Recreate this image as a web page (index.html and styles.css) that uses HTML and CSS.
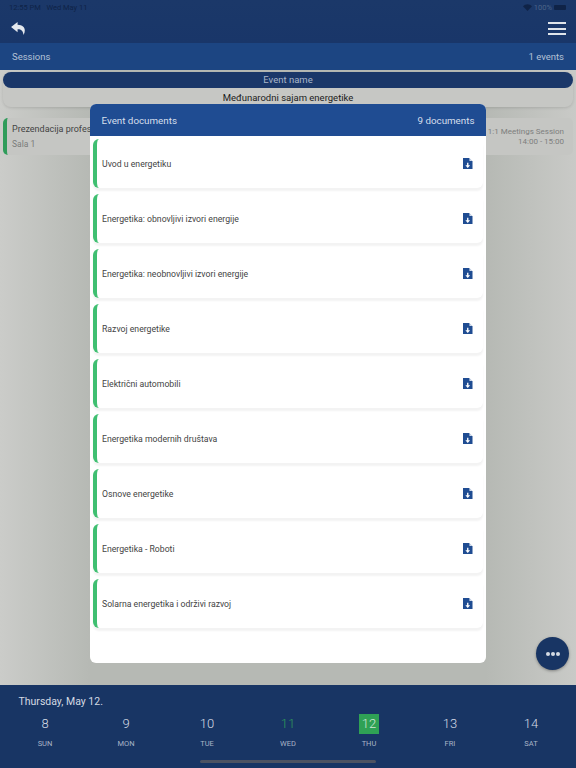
FILE: index.html
```html
<!DOCTYPE html>
<html lang="en">

<head>
  <meta charset="UTF-8">
  <meta name="viewport" content="width=device-width, initial-scale=1.0">
  <title>Sessions</title>
  <link rel="stylesheet" href="styles.css">
</head>

<body>
  <div id="app">
    <header id="top-bar">
      <div class="status-row">
        <span>12:55 PM&nbsp;&nbsp;&nbsp;Wed May 11</span>
        <span class="status-right">
          <svg width="9" height="7" viewBox="0 0 18 14"><path d="M9 14 0 4.500C5-1 13-1 18 4.500Z" fill="#0f2347"/></svg>
          100%
          <span class="battery"></span>
        </span>
      </div>
      <div class="nav-row">
        <svg class="back-icon" width="15" height="13" viewBox="0 0 16 14">
          <path d="M7 0 0 5.500 7 11V7.800C10.500 7.600 12.800 9 13.400 14 16.500 8 14.500 3.300 7 3Z" fill="#e4e8ee"/>
        </svg>
        <div class="burger"><span></span><span></span><span></span></div>
      </div>
    </header>

    <div id="sessions-bar">
      <span>Sessions</span>
      <span>1 events</span>
    </div>

    <main id="content">
      <div class="event-card">
        <div class="event-title">Event name</div>
        <div class="event-value">Međunarodni sajam energetike</div>
      </div>
      <div class="session-card">
        <div>
          <div class="session-name">Prezendacija profesora</div>
          <div class="session-room">Sala 1</div>
        </div>
        <div class="session-meta">1:1 Meetings Session<br>14:00 - 15:00</div>
      </div>
    </main>

    <footer id="calendar">
      <div class="cal-date">Thursday, May 12.</div>
      <div class="cal-week">
        <div class="cal-day"><span class="num">8</span><span class="dow">SUN</span></div>
        <div class="cal-day"><span class="num">9</span><span class="dow">MON</span></div>
        <div class="cal-day"><span class="num">10</span><span class="dow">TUE</span></div>
        <div class="cal-day today"><span class="num">11</span><span class="dow">WED</span></div>
        <div class="cal-day selected"><span class="num">12</span><span class="dow">THU</span></div>
        <div class="cal-day"><span class="num">13</span><span class="dow">FRI</span></div>
        <div class="cal-day"><span class="num">14</span><span class="dow">SAT</span></div>
      </div>
      <div class="home-indicator"></div>
    </footer>

    <button id="fab" type="button"><i></i><i></i><i></i></button>

    <!-- modal lies over the page -->
    <section id="doc-modal">
      <div class="modal-head">
        <span>Event documents</span>
        <span>9 documents</span>
      </div>
      <div class="doc-list">
        <div class="doc-row"><span>Uvod u energetiku</span><svg class="doc-icon" viewBox="0 0 10 12"><path class="sheet" d="M0 0H6.500L10 3.500V12H0Z"/><path class="fold" d="M6.800 0 10 3.200H6.800Z"/><path class="arrow" d="M4.300 5H5.700V7.600H7.500L5 10.400 2.500 7.600H4.300Z"/></svg></div>
        <div class="doc-row"><span>Energetika: obnovljivi izvori energije</span><svg class="doc-icon" viewBox="0 0 10 12"><path class="sheet" d="M0 0H6.500L10 3.500V12H0Z"/><path class="fold" d="M6.800 0 10 3.200H6.800Z"/><path class="arrow" d="M4.300 5H5.700V7.600H7.500L5 10.400 2.500 7.600H4.300Z"/></svg></div>
        <div class="doc-row"><span>Energetika: neobnovljivi izvori energije</span><svg class="doc-icon" viewBox="0 0 10 12"><path class="sheet" d="M0 0H6.500L10 3.500V12H0Z"/><path class="fold" d="M6.800 0 10 3.200H6.800Z"/><path class="arrow" d="M4.300 5H5.700V7.600H7.500L5 10.400 2.500 7.600H4.300Z"/></svg></div>
        <div class="doc-row"><span>Razvoj energetike</span><svg class="doc-icon" viewBox="0 0 10 12"><path class="sheet" d="M0 0H6.500L10 3.500V12H0Z"/><path class="fold" d="M6.800 0 10 3.200H6.800Z"/><path class="arrow" d="M4.300 5H5.700V7.600H7.500L5 10.400 2.500 7.600H4.300Z"/></svg></div>
        <div class="doc-row"><span>Električni automobili</span><svg class="doc-icon" viewBox="0 0 10 12"><path class="sheet" d="M0 0H6.500L10 3.500V12H0Z"/><path class="fold" d="M6.800 0 10 3.200H6.800Z"/><path class="arrow" d="M4.300 5H5.700V7.600H7.500L5 10.400 2.500 7.600H4.300Z"/></svg></div>
        <div class="doc-row"><span>Energetika modernih društava</span><svg class="doc-icon" viewBox="0 0 10 12"><path class="sheet" d="M0 0H6.500L10 3.500V12H0Z"/><path class="fold" d="M6.800 0 10 3.200H6.800Z"/><path class="arrow" d="M4.300 5H5.700V7.600H7.500L5 10.400 2.500 7.600H4.300Z"/></svg></div>
        <div class="doc-row"><span>Osnove energetike</span><svg class="doc-icon" viewBox="0 0 10 12"><path class="sheet" d="M0 0H6.500L10 3.500V12H0Z"/><path class="fold" d="M6.800 0 10 3.200H6.800Z"/><path class="arrow" d="M4.300 5H5.700V7.600H7.500L5 10.400 2.500 7.600H4.300Z"/></svg></div>
        <div class="doc-row"><span>Energetika - Roboti</span><svg class="doc-icon" viewBox="0 0 10 12"><path class="sheet" d="M0 0H6.500L10 3.500V12H0Z"/><path class="fold" d="M6.800 0 10 3.200H6.800Z"/><path class="arrow" d="M4.300 5H5.700V7.600H7.500L5 10.400 2.500 7.600H4.300Z"/></svg></div>
        <div class="doc-row"><span>Solarna energetika i održivi razvoj</span><svg class="doc-icon" viewBox="0 0 10 12"><path class="sheet" d="M0 0H6.500L10 3.500V12H0Z"/><path class="fold" d="M6.800 0 10 3.200H6.800Z"/><path class="arrow" d="M4.300 5H5.700V7.600H7.500L5 10.400 2.500 7.600H4.300Z"/></svg></div>
      </div>
    </section>
  </div>
</body>

</html>
```

FILE: styles.css
```css
html,
body {
  margin: 0;
  padding: 0;
}

body {
  font-family: Roboto, "Liberation Sans", sans-serif;
  background-color: #c8c9c6;
}

#app {
  position: relative;
  width: 576px;
  height: 768px;
  overflow: hidden;
  display: flex;
  flex-direction: column;
  background-color: #c8c9c6;
}

/* top */
#top-bar {
  height: 43px;
  flex: none;
  box-sizing: border-box;
  padding: 3px 10px 0 9px;
  background: linear-gradient(180deg, #1b3869 0, #193669 100%);
}

.status-row {
  display: flex;
  justify-content: space-between;
  align-items: center;
  height: 8px;
  font-size: 7.500px;
  color: #0f2347;
}

.status-right {
  display: flex;
  align-items: center;
  gap: 2px;
  color: #4c6488;
}

.battery {
  width: 12px;
  height: 5px;
  border-radius: 1px;
  background-color: #0f2347;
}

.nav-row {
  display: flex;
  justify-content: space-between;
  align-items: flex-start;
  padding: 11px 0 0 2px;
}

.back-icon {
  display: block;
}

.burger {
  width: 18px;
}

.burger span {
  display: block;
  height: 2px;
  margin-bottom: 3.500px;
  background-color: #dfe4ea;
}

#sessions-bar {
  height: 27px;
  flex: none;
  box-sizing: border-box;
  padding: 0 12px;
  display: flex;
  justify-content: space-between;
  align-items: center;
  font-size: 9.500px;
  color: #b4c2d6;
  background-color: #1c4582;
}

/* page behind the modal */
#content {
  flex: 1;
  padding: 2px 3px 0;
  background: linear-gradient(90deg, #cbccc9 0, #b6b9b4 90px, #b6b9b4 486px, #c9cac7 576px);
}

.event-card {
  border-radius: 8px;
  background-color: #c6c7c4;
  box-shadow: 0 1px 3px rgba(0, 0, 0, 0.12);
  text-align: center;
}

.event-title {
  height: 16px;
  line-height: 16px;
  border-radius: 8px;
  font-size: 9.500px;
  color: #a9b6c9;
  background-color: #1a3769;
}

.event-value {
  height: 19px;
  line-height: 19px;
  font-size: 9.500px;
  color: #1c1c1c;
}

.session-card {
  display: flex;
  justify-content: space-between;
  align-items: center;
  box-sizing: border-box;
  height: 37px;
  margin-top: 11px;
  padding: 0 9px 0 5px;
  border-left: 4px solid #2f9c5a;
  border-radius: 5px;
  background-color: #c5c6c3;
}

.session-name {
  font-size: 9px;
  color: #444;
}

.session-room {
  margin-top: 5px;
  font-size: 8.500px;
  color: #7a7c7a;
}

.session-meta {
  text-align: right;
  font-size: 8px;
  line-height: 9.500px;
  color: #7d7f7e;
}

/* bottom calendar */
#calendar {
  position: relative;
  height: 83px;
  flex: none;
  box-sizing: border-box;
  padding: 10px 4.500px 0;
  background-color: #183564;
}

.cal-date {
  padding-left: 14px;
  font-size: 10.500px;
  line-height: 13px;
  color: #d4dae3;
}

.cal-week {
  display: grid;
  grid-template-columns: repeat(7, 81px);
  margin-top: 6px;
}

.cal-day {
  display: flex;
  flex-direction: column;
  align-items: center;
  color: #d5dbe4;
}

.num {
  width: 20px;
  height: 20px;
  line-height: 20px;
  text-align: center;
  font-size: 13px;
  font-weight: 300;
}

.dow {
  margin-top: 5px;
  font-size: 7.500px;
  line-height: 10px;
  color: #a8b4c6;
}

.today .num {
  color: #2f9c5a;
}

.selected .num {
  background-color: #2fa155;
  color: #cfe6d6;
}

.home-indicator {
  position: absolute;
  left: 200px;
  bottom: 5px;
  width: 176px;
  height: 3px;
  border-radius: 2px;
  background-color: #4d5362;
}

#fab {
  position: absolute;
  left: 536px;
  top: 637px;
  width: 33px;
  height: 33px;
  padding: 0;
  border: none;
  border-radius: 50%;
  display: flex;
  justify-content: center;
  align-items: center;
  gap: 1px;
  background-color: #183564;
  box-shadow: 0 1px 3px rgba(0, 0, 0, 0.35);
}

#fab i {
  width: 4px;
  height: 4px;
  border-radius: 50%;
  background-color: #d5dbe4;
}

/* modal */
#doc-modal {
  position: absolute;
  left: 90px;
  top: 104px;
  width: 396px;
  height: 559px;
  border-radius: 6px;
  overflow: hidden;
  background-color: #fff;
}

.modal-head {
  height: 32px;
  box-sizing: border-box;
  padding: 0 11.500px;
  display: flex;
  justify-content: space-between;
  align-items: center;
  font-size: 9.800px;
  color: #d6dfec;
  background-color: #1f4c92;
}

.doc-list {
  padding: 3px 3px 0;
  display: flex;
  flex-direction: column;
  gap: 6px;
}

.doc-row {
  height: 49px;
  box-sizing: border-box;
  padding: 0 10.500px 0 5px;
  display: flex;
  justify-content: space-between;
  align-items: center;
  border-left: 4px solid #3fbf71;
  border-radius: 6px;
  font-size: 8.700px;
  color: #444;
  box-shadow: 0 3px 2px #f3f3f3;
}

.doc-icon {
  width: 9.500px;
  height: 11.500px;
}

.sheet {
  fill: #1f4c92;
}

.fold {
  fill: #cfd9e8;
}

.arrow {
  fill: #fff;
}
```
